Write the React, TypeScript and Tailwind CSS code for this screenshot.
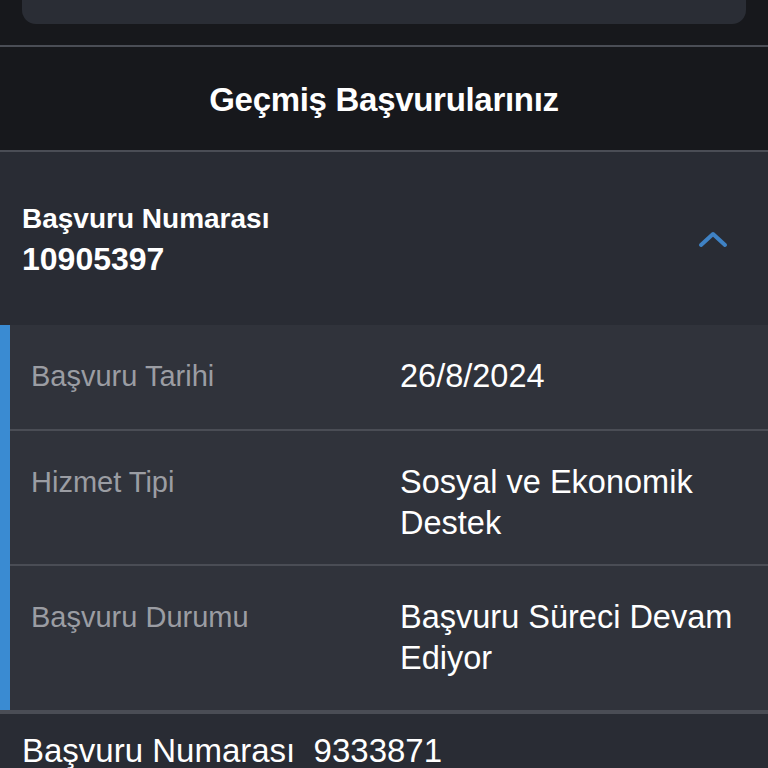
import React from 'react';

const font = { fontFamily: '"Liberation Sans", Arial, sans-serif' };

const rows = [
    { label: 'Başvuru Tarihi', value: '26/8/2024', h: 'h-[104px]' },
    { label: 'Hizmet Tipi', value: 'Sosyal ve Ekonomik Destek', h: 'h-[135px]' },
    { label: 'Başvuru Durumu', value: 'Başvuru Süreci Devam Ediyor', h: 'h-[146px]' },
];

// Chevron pointing up, blue
const ChevronUp: React.FC = () => (
    <svg width="30" height="18" viewBox="0 0 30 18" fill="none">
        <path d="M3 15 L15 4 L27 15" stroke="#3f82c4" strokeWidth="4" strokeLinecap="round" strokeLinejoin="round" />
    </svg>
);

export default function App() {
    return (
        <div className="w-[768px] h-[768px] overflow-hidden bg-[#17181c] text-white" style={font}>
            {/* Top card remnant */}
            <div className="h-[45px] px-[22px]">
                <div className="h-[24px] rounded-b-[14px] bg-[#2a2d35]" />
            </div>
            <div className="h-[2px] bg-[#4a4d55]" />

            {/* Section header */}
            <div className="h-[103px] flex items-center justify-center">
                <h2 className="text-[33px] font-bold tracking-[-0.3px] pt-[3px]">Geçmiş Başvurularınız</h2>
            </div>
            <div className="h-[2px] bg-[#4a4d55]" />

            {/* Expanded item header */}
            <div className="h-[173px] bg-[#292c34] flex items-center justify-between pl-[22px] pr-[40px]">
                <div className="flex flex-col pt-[3px]">
                    <span className="text-[28px] font-bold leading-[38px]">Başvuru Numarası</span>
                    <span className="text-[32px] font-bold leading-[42px]">10905397</span>
                </div>
                <ChevronUp />
            </div>

            {/* Details */}
            <div className="flex bg-[#30333b]">
                <div className="w-[10px] bg-[#3a8bd2]" />
                <div className="flex-1 flex flex-col">
                    {rows.map((r, i) => (
                        <div key={r.label} className={`${r.h} flex pt-[31px] ${i > 0 ? 'border-t-2 border-[#4a4d55]' : ''}`}>
                            <div className="w-[390px] pl-[21px] text-[29px] leading-[41px] text-[#9b9da3]">{r.label}</div>
                            <div className="w-[355px] text-[32.5px] leading-[41px] text-white">{r.value}</div>
                        </div>
                    ))}
                </div>
            </div>
            <div className="h-[4px] bg-[#4a4d55]" />

            {/* Collapsed item */}
            <div className="h-[60px] bg-[#292c34] flex items-center pl-[22px] pt-[14px]">
                <span className="text-[33px] whitespace-pre">Başvuru Numarası  9333871</span>
            </div>
        </div>
    );
}
